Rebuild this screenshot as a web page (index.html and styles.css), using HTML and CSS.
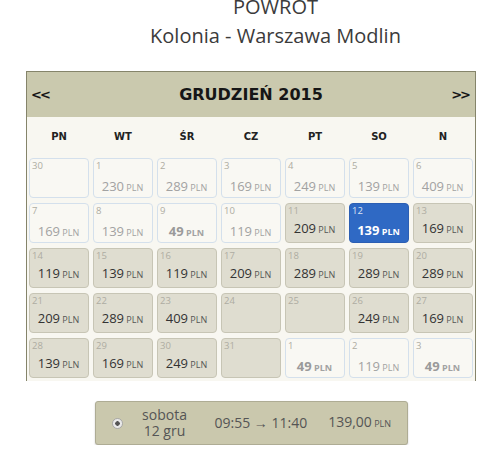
FILE: index.html
```html
<!DOCTYPE html>
<html>
<head>
<meta charset="utf-8">
<link rel="stylesheet" href="styles.css">
</head>
<body>

<div class="route">
    <div class="route-label">POWROT</div>
    <div class="route-name">Kolonia - Warszawa Modlin</div>
</div>

<div class="picker">
    <div class="calendar">
        <div class="cal-head">
            <span class="nav">&lt;&lt;</span>
            <span class="month">GRUDZIEŃ 2015</span>
            <span class="nav">&gt;&gt;</span>
        </div>

        <div class="weekdays">
            <span>PN</span><span>WT</span><span>ŚR</span><span>CZ</span><span>PT</span><span>SO</span><span>N</span>
        </div>

        <div class="days">
            <!-- week 1 -->
            <div class="day off"><span class="num">30</span></div>
            <div class="day off"><span class="num">1</span><span class="price">230<small> PLN</small></span></div>
            <div class="day off"><span class="num">2</span><span class="price">289<small> PLN</small></span></div>
            <div class="day off"><span class="num">3</span><span class="price">169<small> PLN</small></span></div>
            <div class="day off"><span class="num">4</span><span class="price">249<small> PLN</small></span></div>
            <div class="day off"><span class="num">5</span><span class="price">139<small> PLN</small></span></div>
            <div class="day off"><span class="num">6</span><span class="price">409<small> PLN</small></span></div>

            <!-- week 2 -->
            <div class="day off"><span class="num">7</span><span class="price">169<small> PLN</small></span></div>
            <div class="day off"><span class="num">8</span><span class="price">139<small> PLN</small></span></div>
            <div class="day off promo"><span class="num">9</span><span class="price">49<small> PLN</small></span></div>
            <div class="day off"><span class="num">10</span><span class="price">119<small> PLN</small></span></div>
            <div class="day"><span class="num">11</span><span class="price">209<small> PLN</small></span></div>
            <div class="day selected"><span class="num">12</span><span class="price">139<small> PLN</small></span></div>
            <div class="day"><span class="num">13</span><span class="price">169<small> PLN</small></span></div>

            <!-- week 3 -->
            <div class="day"><span class="num">14</span><span class="price">119<small> PLN</small></span></div>
            <div class="day"><span class="num">15</span><span class="price">139<small> PLN</small></span></div>
            <div class="day"><span class="num">16</span><span class="price">119<small> PLN</small></span></div>
            <div class="day"><span class="num">17</span><span class="price">209<small> PLN</small></span></div>
            <div class="day"><span class="num">18</span><span class="price">289<small> PLN</small></span></div>
            <div class="day"><span class="num">19</span><span class="price">289<small> PLN</small></span></div>
            <div class="day"><span class="num">20</span><span class="price">289<small> PLN</small></span></div>

            <!-- week 4 -->
            <div class="day"><span class="num">21</span><span class="price">209<small> PLN</small></span></div>
            <div class="day"><span class="num">22</span><span class="price">289<small> PLN</small></span></div>
            <div class="day"><span class="num">23</span><span class="price">409<small> PLN</small></span></div>
            <div class="day"><span class="num">24</span></div>
            <div class="day"><span class="num">25</span></div>
            <div class="day"><span class="num">26</span><span class="price">249<small> PLN</small></span></div>
            <div class="day"><span class="num">27</span><span class="price">169<small> PLN</small></span></div>

            <!-- week 5 -->
            <div class="day"><span class="num">28</span><span class="price">139<small> PLN</small></span></div>
            <div class="day"><span class="num">29</span><span class="price">169<small> PLN</small></span></div>
            <div class="day"><span class="num">30</span><span class="price">249<small> PLN</small></span></div>
            <div class="day"><span class="num">31</span></div>
            <div class="day off promo"><span class="num">1</span><span class="price">49<small> PLN</small></span></div>
            <div class="day off"><span class="num">2</span><span class="price">119<small> PLN</small></span></div>
            <div class="day off promo"><span class="num">3</span><span class="price">49<small> PLN</small></span></div>
        </div>
    </div>

    <div class="flight">
        <span class="radio"></span>
        <div class="flight-date">sobota<br>12 gru</div>
        <div class="flight-time">09:55 → 11:40</div>
        <div class="flight-price">139,00<small> PLN</small></div>
    </div>
</div>

</body>
</html>
```

FILE: styles.css
```css
body {
    margin: 0;
    background: #ffffff;
    color: #3a3a3a;
    font-family: "Open Sans", "Liberation Sans", sans-serif;
}

.route {
    margin: -8px 0 0 60px;
    text-align: center;
    font-size: 20px;
    line-height: 29px;
    color: #3b3b3b;
}

.picker {
    width: 450px;
    margin: 21px 0 0 26px;
}

.calendar {
    border: 1px solid #85846a;
    border-bottom: none;
    background: #f8f7f1;
}

.cal-head {
    display: flex;
    align-items: center;
    justify-content: space-between;
    height: 45px;
    padding: 0 4px 0 4px;
    background: #cac9ae;
    color: #161616;
    font-family: "DejaVu Sans", sans-serif;
    font-weight: bold;
}

.month {
    font-size: 16px;
}

.nav {
    font-size: 13px;
    letter-spacing: -2px;
    padding-right: 2px;
}

.weekdays {
    display: grid;
    grid-template-columns: repeat(7, 64px);
    height: 38px;
    line-height: 40px;
    text-align: center;
    font-family: "DejaVu Sans", sans-serif;
    font-weight: bold;
    font-size: 10px;
    color: #222222;
}

.days {
    display: grid;
    grid-template-columns: repeat(7, 60px);
    column-gap: 4px;
    row-gap: 5px;
    padding: 3px 1px 3px 2px;
}

.day {
    box-sizing: border-box;
    height: 40px;
    padding: 1px 3px 0 2px;
    border: 1px solid #c7c5b5;
    border-radius: 4px;
    background: #dfddd0;
}

.num {
    display: block;
    font-size: 9.5px;
    line-height: 12px;
    color: #aeaca2;
}

.price {
    display: block;
    margin-top: 3px;
    text-align: center;
    font-size: 13px;
    line-height: 16px;
    color: #333333;
}

.price small,
.flight-price small {
    font-size: 9px;
}

.price small {
    color: #555555;
}

/* days outside the bookable range */
.day.off {
    border-color: #d4e0ec;
    background: #f9f8f3;
}

.day.off .price {
    margin-top: 6px;
    color: #a2a2a2;
}

.day.off .price small {
    color: #a2a2a2;
}

.day.promo .price {
    font-weight: bold;
    color: #9a9a9a;
}

.day.selected {
    border-color: #2c5fb3;
    background: #2f69c4;
}

.day.selected .num {
    color: #dce5f4;
}

.day.selected .price,
.day.selected .price small {
    margin-top: 5px;
    color: #ffffff;
    font-weight: bold;
}

.flight {
    display: flex;
    align-items: center;
    box-sizing: border-box;
    width: 313px;
    height: 44px;
    margin: 20px auto 0;
    padding-left: 16px;
    background: #cac8ad;
    border: 1px solid #aeac94;
    border-radius: 3px;
    box-shadow: 0 1px 2px rgba(0, 0, 0, 0.2);
    font-size: 14px;
    line-height: 16px;
    color: #555555;
}

.radio {
    box-sizing: border-box;
    width: 11px;
    height: 11px;
    border: 1px solid #a8a8a8;
    border-radius: 50%;
    background: radial-gradient(circle, #555555 0 2px, #e6e6e6 2.5px, #f2f2f2);
}

.flight-date {
    width: 60px;
    margin-left: 12px;
    text-align: center;
}

.flight-time {
    margin-left: 20px;
}

.flight-price {
    margin-left: 21px;
}
```
